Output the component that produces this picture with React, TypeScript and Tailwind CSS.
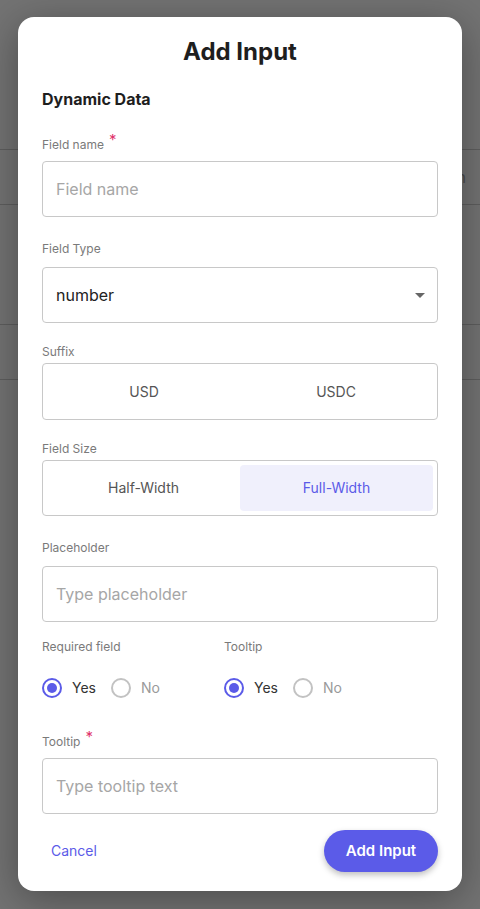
import React, { useState } from 'react';

const Label = ({ text, required }: { text: string; required?: boolean }) => (
    <div className="flex items-start h-4 text-xs leading-4 text-[#7a7a7a]">
        <span>{text}</span>
        {required && <span className="ml-[5px] -mt-[5px] text-[15px] leading-4 text-[#e0336c]">*</span>}
    </div>
);

const TextBox = ({ placeholder }: { placeholder: string }) => (
    <input
        placeholder={placeholder}
        className="block w-full h-14 px-[13px] rounded border border-[#c8c8c8] text-base text-[#222] placeholder:text-[#a6a6a6] outline-none"
    />
);

const Radio = ({ checked, label, onClick }: { checked: boolean; label: string; onClick: () => void }) => (
    <button type="button" onClick={onClick} className="flex items-center gap-[10px]">
        <span
            className={
                checked
                    ? 'flex items-center justify-center w-5 h-5 rounded-full border-2 border-[#5b5be8]'
                    : 'flex items-center justify-center w-5 h-5 rounded-full border-2 border-[#c2c2c2]'
            }
        >
            {checked && <span className="w-[10px] h-[10px] rounded-full bg-[#5b5be8]" />}
        </span>
        <span className={checked ? 'text-sm text-[#333]' : 'text-sm text-[#9a9a9a]'}>{label}</span>
    </button>
);

const YesNo = ({ title, width }: { title: string; width: string }) => {
    const [value, setValue] = useState(true);
    return (
        <div className={width}>
            <Label text={title} />
            <div className="flex items-center gap-[15px] mt-[21px] h-6">
                <Radio checked={value} label="Yes" onClick={() => setValue(true)} />
                <Radio checked={!value} label="No" onClick={() => setValue(false)} />
            </div>
        </div>
    );
};

export default function App() {
    const [suffix, setSuffix] = useState<'USD' | 'USDC' | null>(null);
    const [size, setSize] = useState<'half' | 'full'>('full');

    return (
        <div className="relative h-[909px] w-full overflow-hidden bg-[#737373] font-[Inter,'Noto_Sans',sans-serif]">
            {/* table behind the overlay */}
            <div className="pt-[149px]">
                <div className="h-14 border-y border-[#5e5e5e] flex items-center justify-end pr-[14px] text-base text-[#4a4a4a]">
                    Action
                </div>
                <div className="h-[119px]" />
                <div className="h-14 border-y border-[#5e5e5e]" />
            </div>

            {/* modal */}
            <div className="absolute left-[18px] top-[17px] w-[444px] h-[874px] rounded-2xl bg-white px-6 pt-[19px] shadow-[0_8px_40px_rgba(0,0,0,0.35)]">
                <h1 className="text-center text-2xl leading-8 font-bold text-[#1e1e1e]">Add Input</h1>
                <h2 className="mt-[19px] text-base leading-6 font-bold text-[#1e1e1e]">Dynamic Data</h2>

                <div className="mt-[26px]">
                    <Label text="Field name" required />
                    <div className="mt-2">
                        <TextBox placeholder="Field name" />
                    </div>
                </div>

                <div className="mt-6">
                    <Label text="Field Type" />
                    <div className="mt-[10px] relative">
                        <select className="block w-full h-14 px-[13px] appearance-none rounded border border-[#c8c8c8] bg-white text-base text-[#222] outline-none">
                            <option>number</option>
                            <option>text</option>
                        </select>
                        <svg className="absolute right-[13px] top-[26px] pointer-events-none" width="10" height="5" viewBox="0 0 10 5">
                            <path d="M0 0h10L5 5z" fill="#666" />
                        </svg>
                    </div>
                </div>

                <div className="mt-[21px]">
                    <Label text="Suffix" />
                    <div className="mt-[3px] grid grid-cols-2 h-[57px] p-[5px] rounded border border-[#c8c8c8]">
                        {(['USD', 'USDC'] as const).map((s) => (
                            <button
                                key={s}
                                type="button"
                                onClick={() => setSuffix(s)}
                                className={
                                    suffix === s
                                        ? 'rounded text-sm bg-[#f0f0fc] text-[#5b5be8]'
                                        : 'rounded text-sm text-[#555]'
                                }
                            >
                                {s}
                            </button>
                        ))}
                    </div>
                </div>

                <div className="mt-[21px]">
                    <Label text="Field Size" />
                    <div className="mt-[3px] grid grid-cols-2 h-14 p-[4px] rounded border border-[#c8c8c8]">
                        <button
                            type="button"
                            onClick={() => setSize('half')}
                            className={size === 'half' ? 'rounded text-sm bg-[#f0f0fc] text-[#5b5be8]' : 'rounded text-sm text-[#555]'}
                        >
                            Half-Width
                        </button>
                        <button
                            type="button"
                            onClick={() => setSize('full')}
                            className={size === 'full' ? 'rounded text-sm bg-[#f0f0fc] text-[#5b5be8]' : 'rounded text-sm text-[#555]'}
                        >
                            Full-Width
                        </button>
                    </div>
                </div>

                <div className="mt-6">
                    <Label text="Placeholder" />
                    <div className="mt-[10px]">
                        <TextBox placeholder="Type placeholder" />
                    </div>
                </div>

                <div className="mt-[17px] flex">
                    <YesNo title="Required field" width="w-[182px]" />
                    <YesNo title="Tooltip" width="flex-1" />
                </div>

                <div className="mt-[34px]">
                    <Label text="Tooltip" required />
                    <div className="mt-2">
                        <TextBox placeholder="Type tooltip text" />
                    </div>
                </div>

                <div className="mt-4 flex items-center justify-between">
                    <button type="button" className="px-[9px] text-sm text-[#5b5be8]">
                        Cancel
                    </button>
                    <button
                        type="button"
                        className="h-[42px] w-[114px] rounded-full bg-[#5b5be8] text-[15px] font-semibold text-white shadow-[0_3px_6px_rgba(0,0,0,0.25)]"
                    >
                        Add Input
                    </button>
                </div>
            </div>
        </div>
    );
}
